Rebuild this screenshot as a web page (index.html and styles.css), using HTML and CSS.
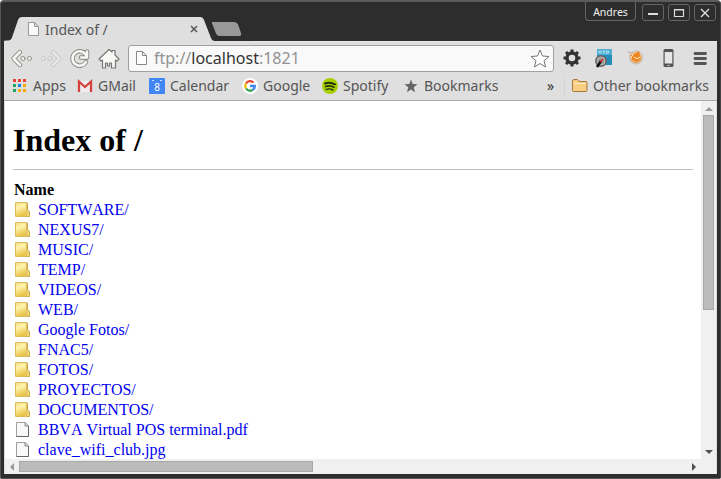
FILE: index.html
```html
<!DOCTYPE html>
<html lang="en">
<head>
<meta charset="utf-8">
<title>Index of /</title>
<link rel="stylesheet" href="styles.css">
</head>
<body>
<div class="window">
  <header class="titlebar">
    <svg class="tabshape" width="248" height="28" viewBox="0 0 248 28">
      <path d="M0 28V24.500q0-1 2-1h2q3 0 4-3L14 3q1-3 4-3H196q3 0 4 3l7 18q1 3 4 3h36v4z" fill="#dfdfdf"/>
      <path d="M208 5h22q3 0 4 2.500l3 8.500q1 3-2 3h-19q-3 0-4-2.500l-3.500-9q-1.500-2.500.5-2.500z" fill="#999"/>
    </svg>
    <div class="tab">
      <svg width="12" height="15" viewBox="0 0 12 15"><path d="M.5.5h6l4 4v9H.5zM6.500.5v4h4" fill="#fafafa" stroke="#999"/></svg>
      <span class="tabtitle">Index of /</span>
      <svg class="tabclose" width="8" height="8" viewBox="0 0 8 8"><path d="M1 1l6 6M7 1L1 7" stroke="#555" stroke-width="1.500"/></svg>
    </div>
    <div class="controls">
      <span class="user">Andres</span>
      <span class="control"><svg width="12" height="10" viewBox="0 0 12 10"><path d="M1 6h10" stroke="#ddd" stroke-width="2"/></svg></span>
      <span class="control"><svg width="12" height="10" viewBox="0 0 12 10"><path d="M1.500 1.500h9v7h-9zM1.500 2h9" fill="none" stroke="#ddd" stroke-width="1.200"/></svg></span>
      <span class="control"><svg width="12" height="10" viewBox="0 0 12 10"><path d="M2 1l8 8M10 1L2 9" stroke="#ddd" stroke-width="1.400"/></svg></span>
    </div>
  </header>

  <nav class="toolbar">
    <svg class="navicons" width="112" height="26" viewBox="0 0 112 26" stroke-linecap="round" stroke-linejoin="round">
      <g fill="none" stroke="#858580" stroke-width="4.400"><path d="M12 5L5.500 11.500 12 18"/><path d="M79 4.500v6h-6M78 8a7.200 7.200 0 1 0 0 7"/></g>
      <g fill="none" stroke="#f8f8f4" stroke-width="2.600"><path d="M12 5L5.500 11.500 12 18"/><path d="M79 4.500v6h-6M78 8a7.200 7.200 0 1 0 0 7"/></g>
      <g fill="#f5f5f2" stroke="#8d8d88"><circle cx="15" cy="11.500" r="2"/><circle cx="21.500" cy="11.500" r="2"/></g>
      <g fill="#e6e6e6" stroke="#c6c6c6"><circle cx="35.500" cy="11.500" r="2"/><circle cx="42" cy="11.500" r="2"/></g>
      <path d="M45 5l6.500 6.500L45 18" fill="none" stroke="#c6c6c6" stroke-width="4.200"/><path d="M45 5l6.500 6.500L45 18" fill="none" stroke="#e7e7e7" stroke-width="2.500"/>
      <path d="M91 12L101 2.500l3 2.500V3.500h3v4.500l4 4-2 2-1.500-1v8h-4v-5h-2v3h-2v-3h-2v5h-3v-8l-1.500 1z" fill="#f8f8f4" stroke="#777" stroke-width="1.200"/>
    </svg>
    <div class="address">
      <svg width="12" height="15" viewBox="0 0 12 15"><path d="M.5.5h6l4 4v9H.5zM6.500.5v4h4" fill="#fdfdfd" stroke="#888"/></svg>
      <span class="url">ftp://<b>localhost</b>:1821</span>
      <svg class="star" width="20" height="19" viewBox="0 0 20 19"><path d="M10 1l2.500 6 6.500.5-5 4.200 1.600 6.300L10 14.500 4.400 18 6 11.700 1 7.500 7.500 7z" fill="#fff" stroke="#777" stroke-linejoin="round"/></svg>
    </div>
    <div class="extensions">
      <svg width="18" height="20" viewBox="0 0 18 20"><circle cx="9" cy="10" r="5" fill="none" stroke="#333" stroke-width="3.400"/><path d="M9 1.500v3M9 15.500v3M.5 10h3M14.500 10h3M3 4l2 2M13 14l2 2M3 16l2-2M13 6l2-2" stroke="#333" stroke-width="3"/></svg>
      <svg width="18" height="20" viewBox="0 0 18 20"><path d="M2 1h15v16H2z" fill="#258db8"/><path d="M2 1h15v6H2z" fill="#4cadd0"/><path d="M4 2.500v3M4 4h2M6 2.500v3M7.500 3h3M9 3v3M11.500 6V3h2v2h-2" stroke="#a9e0f2" fill="none"/><circle cx="6" cy="13" r="4.500" fill="#888" stroke="#666" stroke-width="3"/><circle cx="6" cy="13" r="4" fill="#999" stroke="#bbb"/><path d="M2 19l4-6" stroke="#111" stroke-width="2.500"/><path d="M5 14l3-3" stroke="#d22" stroke-width="1.500"/></svg>
      <svg width="18" height="20" viewBox="0 0 18 20"><circle cx="9" cy="9.500" r="6.500" fill="#f5c998" stroke="#bbb"/><path d="M3 7l4-1 5-3 1 4 1 4-4 3-5-2z" fill="#ed8420"/><path d="M1 4.500l5 1.500-2 4M7 9l3 2 3-2" fill="none" stroke="#fff4df"/><path d="M1 4l5 1.500" stroke="#b99"/><path d="M4 12q5 5 10 0" fill="none" stroke="#e09a50"/></svg>
      <svg width="18" height="20" viewBox="0 0 18 20"><rect x="4.500" y="1" width="10" height="18" rx="1.500" fill="#555"/><path d="M5.700 4h7.600v11.500H5.700z" fill="#e6e6e6"/><path d="M8.500 17.500h2" stroke="#ddd"/></svg>
      <svg width="18" height="20" viewBox="0 0 18 20"><path d="M4 5.500h10.500M4 10.500h10.500M4 15.500h10.500" stroke="#555" stroke-width="2.800" stroke-linecap="round"/></svg>
    </div>
  </nav>

  <nav class="bookmarks">
    <span class="mark"><svg width="16" height="16" viewBox="0 0 16 16"><path d="M1 1h3v3H1zM6 1h3v3H6zM11 1h3v3h-3z" fill="#ea4335"/><path d="M1 6h3v3H1z" fill="#20a464"/><path d="M6 6h3v3H6z" fill="#1683e8"/><path d="M11 6h3v3h-3zM6 11h3v3H6zM11 11h3v3h-3z" fill="#f6a800"/><path d="M1 11h3v3H1z" fill="#20a464"/></svg><span>Apps</span></span>
    <span class="mark"><svg width="16" height="16" viewBox="0 0 16 16"><path d="M2 3h12v11H2z" fill="#eee"/><path d="M2 14V3.500l6 5.500 6-5.500V14" fill="none" stroke="#d5423b" stroke-width="2.300"/></svg><span>GMail</span></span>
    <span class="mark"><svg width="16" height="16" viewBox="0 0 16 16"><rect width="16" height="16" rx="1" fill="#4285f4"/><path d="M3 2.500h2M11 2.500h2" stroke="#cfe0ff"/><text class="day" x="8" y="13">8</text></svg><span>Calendar</span></span>
    <span class="mark"><svg width="16" height="16" viewBox="0 0 16 16"><circle cx="8" cy="8" r="8" fill="#fff"/><g fill="none" stroke-width="2.300"><path d="M4 5.500A4.800 4.800 0 0 1 11.500 4.500" stroke="#ea4335"/><path d="M4 5.500a4.800 4.800 0 0 0 0 5" stroke="#fbbc05"/><path d="M4 10.500a4.800 4.800 0 0 0 7 1.200" stroke="#34a853"/><path d="M11 11.700A4.500 4.500 0 0 0 12.800 8H8" stroke="#4285f4"/></g></svg><span>Google</span></span>
    <span class="mark"><svg width="16" height="16" viewBox="0 0 16 16"><circle cx="8" cy="8" r="8" fill="#a6cf00"/><g fill="none" stroke="#27330a" stroke-linecap="round"><path d="M3 5.500q5-2 10 .8" stroke-width="2"/><path d="M3.500 8.500q4.500-1.500 8.500.8" stroke-width="1.600"/><path d="M4 11.300q4-1.200 7 .8" stroke-width="1.300"/></g></svg><span>Spotify</span></span>
    <span class="mark"><svg width="16" height="16" viewBox="0 0 16 16"><path d="M8 1.500l1.700 4.500 4.800.3-3.700 3 1.200 5L8 11.500l-4 2.800 1.200-5-3.700-3 4.800-.3z" fill="#666"/></svg><span>Bookmarks</span></span>
    <span class="more">»</span>
    <span class="mark other"><svg width="16" height="16" viewBox="0 0 16 16"><path d="M.5 3q0-1.500 1.500-1.500h3.500L7 3.500h7q1 0 1 1v8q0 1-1 1H1.500q-1 0-1-1z" fill="#f8ce83" stroke="#a9793b"/><path d="M1.500 5.500h12.500" stroke="#ffebc3"/></svg><span>Other bookmarks</span></span>
  </nav>

  <div class="viewport">
    <main class="page">
      <h1>Index of /</h1>
      <div class="listing">
        <div class="heading">Name</div>
        <a class="dir">SOFTWARE/</a>
        <a class="dir">NEXUS7/</a>
        <a class="dir">MUSIC/</a>
        <a class="dir">TEMP/</a>
        <a class="dir">VIDEOS/</a>
        <a class="dir">WEB/</a>
        <a class="dir">Google Fotos/</a>
        <a class="dir">FNAC5/</a>
        <a class="dir">FOTOS/</a>
        <a class="dir">PROYECTOS/</a>
        <a class="dir">DOCUMENTOS/</a>
        <a class="file">BBVA Virtual POS terminal.pdf</a>
        <a class="file">clave_wifi_club.jpg</a>
      </div>
    </main>
    <div class="vscroll"><i class="up"></i><div class="vthumb"></div><i class="down"></i></div>
    <div class="hscroll"><i class="left"></i><div class="hthumb"></div><i class="right"></i></div>
    <div class="corner"></div>
  </div>
</div>
<svg class="symbols" width="0" height="0">
  <defs>
    <linearGradient id="gold" x2=".3" y2="1"><stop stop-color="#f3dc80"/><stop offset=".4" stop-color="#fff3ae"/><stop offset="1" stop-color="#e9c548"/></linearGradient>
    <symbol id="folder" viewBox="0 0 16 16"><path d="M11 1h1.500v6.500l2 2v5h-3.500z" fill="#f0d673" stroke="#cda94a"/><path d="M.5.500h11v14H.5z" fill="url(#gold)" stroke="#dcbc5e"/></symbol>
    <symbol id="sheet" viewBox="0 0 16 16"><path d="M1.500.5h9l3 3v11h-12z" fill="#f8f8f8" stroke="#a0a0a0"/><path d="M13.500 4v10.500h-12" fill="none" stroke="#666"/><path d="M10 .5v3.500h3.500" fill="#ddd" stroke="#888"/></symbol>
  </defs>
</svg>
<script src="icons.js"></script>
</body>
</html>
```
FILE: styles.css
```css
* { box-sizing: border-box; }
body { margin: 0; background: #fff; }
svg { display: block; flex: none; }
.window {
  width: 721px; height: 479px; overflow: hidden;
  display: grid; grid-template-rows: 39px 32px 28px 1fr;
  padding: 0 3px 4px 3px;
  background: #2d2d2d; border-top: 2px solid #5b5b5b; border-left: 1px solid #555;
  border-right: 1px solid #444; border-bottom: 1px solid #555;
  border-radius: 4px 4px 2px 2px;
  font-family: "Noto Sans", sans-serif; color: #555;
}
.titlebar { position: relative; display: flex; justify-content: space-between; }
.tabshape { position: absolute; left: 0; top: 15px; }
.tab { position: relative; display: flex; width: 201px; padding: 20px 0 0 24px; align-items: flex-start; }
.tabtitle { font-size: 14px; line-height: 15px; margin-left: 5px; }
.tabclose { margin: 3px 7px 0 auto; }
.controls { display: flex; gap: 4px; align-items: flex-start; margin-right: 1px; }
.user, .control { height: 17px; border: 1px solid #656565; border-radius: 3px; }
.user { width: 51px; height: 19px; margin-right: 2px; border-top: 0; border-radius: 0 0 4px 4px; text-align: center; font-size: 10.5px; line-height: 20px; color: #eee; }
.control { width: 22px; margin-top: 2px; display: flex; align-items: center; justify-content: center; }
.toolbar, .bookmarks { background: #dfdfdf; }
.toolbar { display: flex; align-items: flex-start; border-top: 1px solid #e8e8e8; }
.navicons { margin: 5px 0 0 4px; }
.address { width: 426px; height: 27px; margin: 3px 0 0 8px; padding: 0 3px 0 7px; display: flex; align-items: center; border: 1px solid #a0a0a0; border-radius: 3px; background: #f9f9f9; }
.url { margin: -2px 0 0 6px; font-size: 16px; line-height: 20px; color: #919191; }
.url b { color: #333; font-weight: 400; }
.star { margin-left: auto; }
.extensions { display: flex; gap: 14px; margin: 6px 0 0 9px; }
.bookmarks { display: grid; grid-template-columns: 65px 72px 93px 80px 81px 144px 17px 1fr; padding: 0 0 1px 8px; align-items: center; border-bottom: 1px solid #aaa; }
.mark { display: flex; align-items: center; gap: 5px; font-size: 14px; line-height: 18px; white-space: nowrap; }
.day { font: 10px "Noto Sans", sans-serif; fill: #fff; text-anchor: middle; }
.more { font-size: 14px; line-height: 16px; color: #333; }
.other { height: 24px; padding-left: 7px; border-left: 1px solid #d2d6da; }
.viewport { display: grid; grid-template: 1fr 15px / 1fr 15px; min-height: 0; background: #f0f0f0; border-left: 1px solid #ddd; border-right: 1px solid #ddd; }
.page { background: #fff; overflow: hidden; padding: 21px 8px 0; font: 16px "Liberation Serif", serif; font-kerning: none; color: #000; min-height: 0; }
h1 { margin: 0 0 10px; padding-bottom: 10px; height: 48px; border-bottom: 1px solid #c0c0c0; font-size: 32px; line-height: 37px; }
.heading, .dir, .file { height: 20px; line-height: 20px; padding-left: 1px; }
.heading { font-weight: bold; }
.dir, .file { display: flex; align-items: center; gap: 7px; padding-left: 2px; color: #00e; }
.vscroll, .hscroll { display: flex; align-items: center; }
.vscroll { flex-direction: column; padding: 6px 0 5px; }
.hscroll { padding: 0 5px; }
.vthumb { width: 11px; height: 195px; margin-top: 4px; background: #bcbcbc; border: 1px solid #a8a8a8; }
.hthumb { width: 294px; height: 11px; margin-left: 5px; background: #bcbcbc; border: 1px solid #a8a8a8; }
.up, .down { border: 4px solid transparent; border-top: 0; border-bottom-color: #999; }
.down { margin-top: auto; border-bottom: 0; border-top: 4px solid #505050; }
.left, .right { border: 4px solid transparent; border-left: 0; border-right-color: #999; }
.right { margin-left: auto; border-right: 0; border-left: 4px solid #505050; }
.symbols { position: absolute; }
```
FILE: icons.js
```js
document.querySelectorAll('.dir, .file').forEach(row => {
  const id = row.classList.contains('dir') ? 'folder' : 'sheet';
  row.insertAdjacentHTML('afterbegin', `<svg width="16" height="16"><use href="#${id}"/></svg>`);
});
```
